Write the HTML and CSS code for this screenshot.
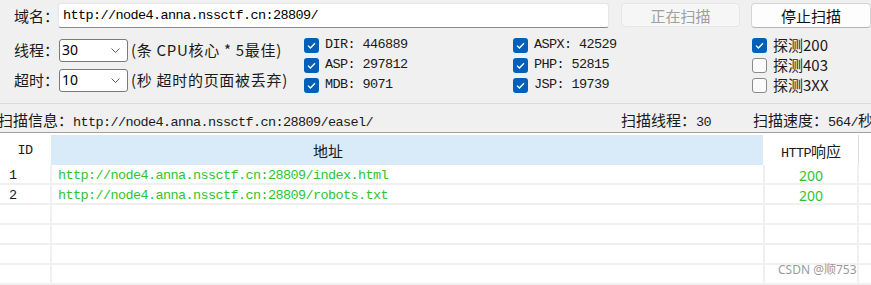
FILE: index.html
```html
<!DOCTYPE html>
<html lang="zh-CN">
<head>
  <meta charset="UTF-8">
  <title>目录扫描</title>
  <link rel="stylesheet" href="styles.css">
</head>
<body>
  <div class="panel">
    <div class="row-domain">
      <span class="label">域名：</span>
      <div class="domain-input mono">http://node4.anna.nssctf.cn:28809/</div>
      <button class="btn btn-disabled">正在扫描</button>
      <button class="btn btn-stop">停止扫描</button>
    </div>

    <div class="options">
      <div class="params">
        <div class="param-row">
          <span class="label">线程：</span>
          <div class="select">
            <span>30</span>
            <svg width="9" height="5" viewBox="0 0 9 5"><polyline points="0.5,0.5 4.5,4.5 8.5,0.5" fill="none" stroke="#606060" stroke-width="1"/></svg>
          </div>
          <span class="hint">(条 CPU核心 * 5最佳)</span>
        </div>
        <div class="param-row">
          <span class="label">超时：</span>
          <div class="select">
            <span>10</span>
            <svg width="9" height="5" viewBox="0 0 9 5"><polyline points="0.5,0.5 4.5,4.5 8.5,0.5" fill="none" stroke="#606060" stroke-width="1"/></svg>
          </div>
          <span class="hint">(秒 超时的页面被丢弃)</span>
        </div>
      </div>

      <div class="checks">
        <label class="check"><span class="box on"><svg width="15" height="15" viewBox="0 0 15 15"><path d="M4 7.6 L6.4 10 L11 5.2" fill="none" stroke="#fff" stroke-width="1.3"/></svg></span><span class="mono">DIR: 446889</span></label>
        <label class="check"><span class="box on"><svg width="15" height="15" viewBox="0 0 15 15"><path d="M4 7.6 L6.4 10 L11 5.2" fill="none" stroke="#fff" stroke-width="1.3"/></svg></span><span class="mono">ASPX: 42529</span></label>
        <label class="check"><span class="box on"><svg width="15" height="15" viewBox="0 0 15 15"><path d="M4 7.6 L6.4 10 L11 5.2" fill="none" stroke="#fff" stroke-width="1.3"/></svg></span><span>探测200</span></label>

        <label class="check"><span class="box on"><svg width="15" height="15" viewBox="0 0 15 15"><path d="M4 7.6 L6.4 10 L11 5.2" fill="none" stroke="#fff" stroke-width="1.3"/></svg></span><span class="mono">ASP: 297812</span></label>
        <label class="check"><span class="box on"><svg width="15" height="15" viewBox="0 0 15 15"><path d="M4 7.6 L6.4 10 L11 5.2" fill="none" stroke="#fff" stroke-width="1.3"/></svg></span><span class="mono">PHP: 52815</span></label>
        <label class="check"><span class="box"></span><span>探测403</span></label>

        <label class="check"><span class="box on"><svg width="15" height="15" viewBox="0 0 15 15"><path d="M4 7.6 L6.4 10 L11 5.2" fill="none" stroke="#fff" stroke-width="1.3"/></svg></span><span class="mono">MDB: 9071</span></label>
        <label class="check"><span class="box on"><svg width="15" height="15" viewBox="0 0 15 15"><path d="M4 7.6 L6.4 10 L11 5.2" fill="none" stroke="#fff" stroke-width="1.3"/></svg></span><span class="mono">JSP: 19739</span></label>
        <label class="check"><span class="box"></span><span>探测3XX</span></label>
      </div>
    </div>
  </div>

  <div class="status">
    <span class="status-info">扫描信息：<span class="mono">http://node4.anna.nssctf.cn:28809/easel/</span></span>
    <span>扫描线程：<span class="mono">30</span></span>
    <span>扫描速度：<span class="mono">564/</span>秒</span>
  </div>

  <div class="results">
    <div class="results-head">
      <div class="cell-id mono">ID</div>
      <div class="cell-url head-url">地址</div>
      <div class="cell-code"><span class="mono">HTTP</span>响应</div>
      <div class="cell-rest"></div>
    </div>
    <div class="results-body">
      <div class="cell-id">1</div>
      <div class="cell-url mono ok">http://node4.anna.nssctf.cn:28809/index.html</div>
      <div class="cell-code ok">200</div>
      <div></div>

      <div class="cell-id">2</div>
      <div class="cell-url mono ok">http://node4.anna.nssctf.cn:28809/robots.txt</div>
      <div class="cell-code ok">200</div>
      <div></div>

      <div></div><div></div><div></div><div></div>
      <div></div><div></div><div></div><div></div>
      <div></div><div></div><div></div><div></div>
      <div></div><div></div><div></div><div></div>
    </div>
  </div>

  <div class="watermark">CSDN @顺753</div>
</body>
</html>
```

FILE: styles.css
```css
body {
  margin: 0;
  width: 871px;
  height: 285px;
  overflow: hidden;
  position: relative;
  background-color: #fff;
  font-family: "Noto Sans CJK SC", sans-serif;
  font-size: 15px;
  line-height: 18px;
  color: #1a1a1a;
}

.mono {
  font-family: "Liberation Mono", "Noto Sans CJK SC", monospace;
  font-size: 13.5px;
  letter-spacing: -0.6px;
}

.panel {
  background-color: #f0f0f0;
  height: 103px;
  border-bottom: 1px solid #dcdcdc;
}

.row-domain {
  display: flex;
  align-items: center;
  height: 25px;
  padding-top: 3px;
  white-space: nowrap;
}

.row-domain .label {
  width: 44px;
  margin-left: 14px;
}

.domain-input {
  box-sizing: border-box;
  width: 554px;
  height: 25px;
  padding: 3px 4px;
  background-color: #fff;
  border: 1px solid #e6e6e6;
  border-bottom-color: #8a8a8a;
  border-radius: 3px;
  color: #000;
}

.btn {
  box-sizing: border-box;
  height: 25px;
  padding: 0;
  font-family: "Noto Sans CJK SC", sans-serif;
  font-size: 15px;
  border-radius: 4px;
  flex-shrink: 0;
}

.btn-disabled {
  width: 119px;
  height: 24px;
  margin-left: 12px;
  align-self: flex-start;
  background-color: #f6f6f6;
  border: 1px solid #e6e6e6;
  color: #a0a0a0;
}

.btn-stop {
  width: 120px;
  margin-left: 11px;
  background-color: #fdfdfd;
  border: 1px solid #d4d4d4;
  border-bottom-color: #b4b4b4;
  color: #111;
}

.options {
  display: flex;
  padding-top: 7px;
}

.params {
  width: 290px;
  padding-left: 14px;
}

.param-row {
  display: flex;
  align-items: center;
  height: 30px;
  white-space: nowrap;
}

.param-row .label {
  width: 45px;
}

.select {
  box-sizing: border-box;
  width: 69px;
  height: 23px;
  display: flex;
  align-items: center;
  justify-content: space-between;
  padding: 0 7px 0 2px;
  background-color: #fff;
  border: 1px solid #7a7a7a;
  border-radius: 3px;
  font-family: "Noto Sans", sans-serif;
  font-size: 14px;
  color: #000;
}

.hint {
  margin-left: 3px;
  letter-spacing: 0.7px;
}

.checks {
  display: grid;
  grid-template-columns: 209px 239px 1fr;
  grid-auto-rows: 20px;
}

.check {
  display: flex;
  align-items: center;
  gap: 6px;
  white-space: nowrap;
}

.box {
  box-sizing: border-box;
  width: 15px;
  height: 15px;
  border: 1px solid #8a8a8a;
  border-radius: 3px;
  background-color: #fbfbfb;
}

.box.on {
  border: none;
  background-color: #005fb8;
}

.box svg {
  display: block;
}

.status {
  box-sizing: border-box;
  height: 29px;
  display: grid;
  grid-template-columns: 621px 132px 1fr;
  align-items: end;
  background-color: #f0f0f0;
  border-bottom: 1px solid #a0a0a0;
  white-space: nowrap;
}

.status-info {
  margin-left: -2px;
}

.results {
  padding-top: 2px;
}

.results-head,
.results-body {
  display: grid;
  grid-template-columns: 50px 711px 92px 1fr;
  column-gap: 2px;
}

.results-head {
  height: 30px;
  align-items: center;
}

.results-head > div {
  height: 30px;
  line-height: 31px;
}

.results-head .cell-id {
  text-align: center;
}

.head-url {
  background-color: #d9eaf8;
  padding-left: 262px;
  margin-left: -1px;
}

.results-head .cell-code {
  text-align: center;
}

.results-head .cell-rest {
  box-shadow: -1px 0 0 #dedede;
}

.results-body {
  grid-auto-rows: 18px;
  row-gap: 2px;
  padding-bottom: 2px;
  background-color: #f0f0f0;
}

.results-body > div {
  background-color: #fff;
  white-space: nowrap;
  line-height: 21px;
}

.results-body .cell-id {
  padding-left: 9px;
  font-family: "Liberation Mono", monospace;
  font-size: 13.5px;
}

.results-body .cell-url {
  padding-left: 6px;
}

.results-body .cell-code {
  text-align: center;
  font-family: "Noto Sans", sans-serif;
  font-size: 14px;
}

.ok {
  color: #2fc42f;
}

.watermark {
  position: absolute;
  left: 778px;
  top: 262px;
  font-family: "Noto Sans", "Noto Sans CJK SC", sans-serif;
  font-size: 12px;
  line-height: 16px;
  color: #9a9a9a;
}
```
